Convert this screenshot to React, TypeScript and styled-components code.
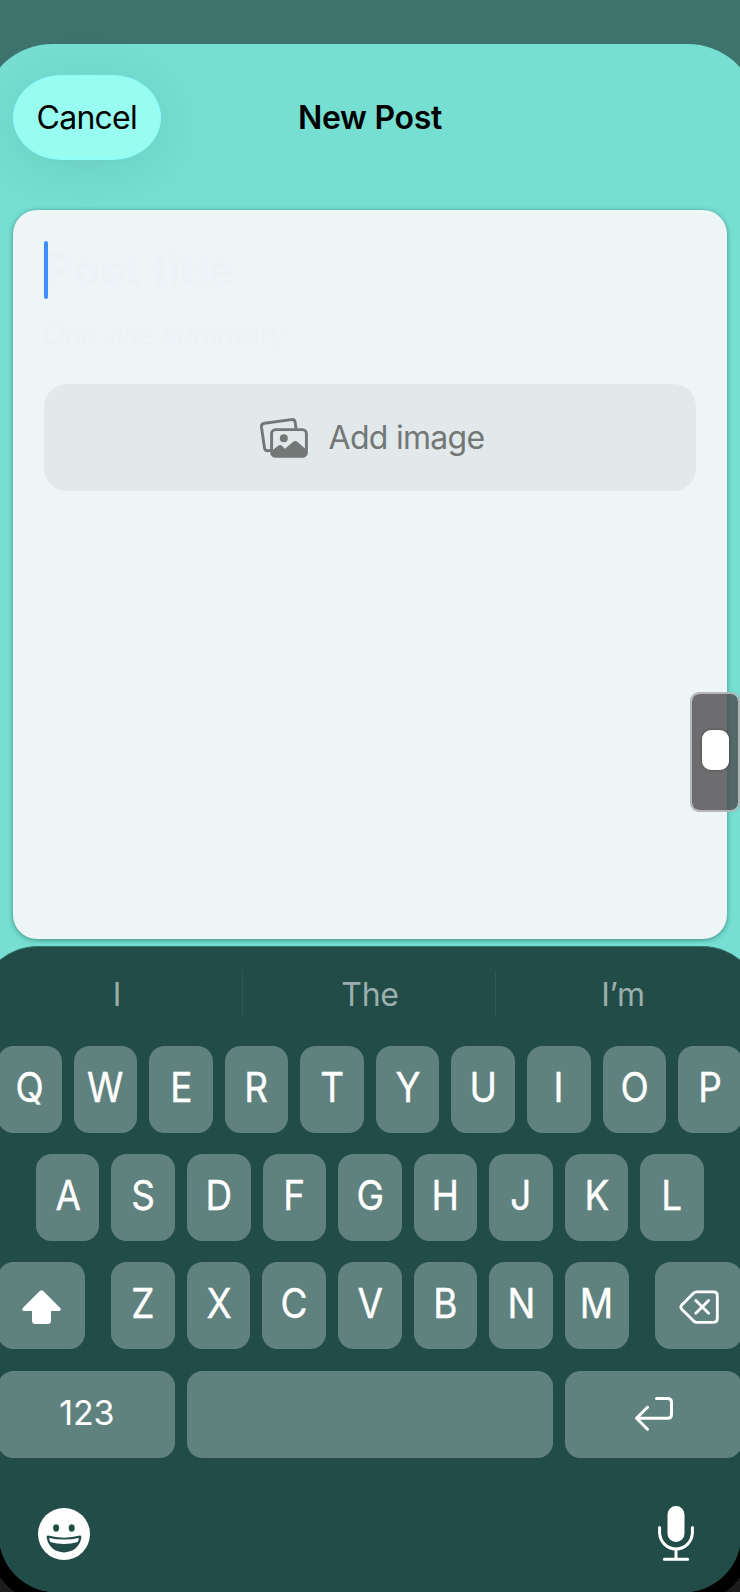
import React from "react";
import styled, { createGlobalStyle } from "styled-components";

const GlobalStyle = createGlobalStyle`
  *, *::before, *::after { box-sizing: border-box; }
  html, body { margin: 0; padding: 0; background: #1c1c1c; }
  body { width: 740px; height: 1592px; overflow: hidden; font-family: Inter, "Liberation Sans", sans-serif; }
  button { font: inherit; border: 0; padding: 0; margin: 0; background: none; }
`;

const Page = styled.div`
  width: 740px;
  height: 1592px;
  overflow: hidden;
  background: #1c1c1c;
`;

const Bezel = styled.div`
  width: 768px;
  height: 1606px;
  margin: 0 -14px;
  padding: 0 13px 14px;
  background: #000;
  border-radius: 0 0 71px 71px;
`;

const Screen = styled.main`
  height: 1592px;
  padding-top: 44px;
  overflow: hidden;
  background: linear-gradient(#3e736d 50%, #224c47 50%);
  border-radius: 0 0 57px 57px;
`;

const Sheet = styled.section`
  height: 1548px;
  margin: 0 -12px;
  padding: 0 13px;
  display: flex;
  flex-direction: column;
  background: linear-gradient(#76dfd2 1000px, #224c47 1000px);
  border-radius: 66px 66px 0 0 / 58px 58px 0 0;
`;

const NavBar = styled.header`
  height: 166px;
  flex: none;
  padding: 30.5px 12.5px 0;
  display: grid;
  grid-template-columns: 148.5px 1fr 148.5px;
  align-items: start;
`;

const CancelButton = styled.button`
  height: 85px;
  border-radius: 48px / 42.5px;
  border: 1px solid #8dfdfb;
  background: #98fcf1;
  box-shadow: 0 8px 52px rgba(0, 50, 40, 0.1);
  color: #000;
  font-size: 32px;
  letter-spacing: -0.75px;
  line-height: 84px;
`;

const NavTitle = styled.h1`
  margin: 0;
  text-align: center;
  font-size: 32px;
  font-weight: 600;
  letter-spacing: -0.3px;
  line-height: 86px;
  color: #000;
`;

const Card = styled.article`
  height: 729px;
  flex: none;
  margin: 0 13px;
  padding: 31px 31px 0 30.5px;
  border-radius: 24px;
  background: #edf5f7;
  box-shadow: 0 1px 5px rgba(0, 60, 50, 0.5);
`;

const TitleField = styled.div`
  display: flex;
  align-items: center;
  height: 58px;
  color: #eef2f6;
  font-size: 44px;
  font-weight: 700;
  letter-spacing: 0.2px;
  line-height: 61px;
`;

const Caret = styled.span`
  position: relative;
  z-index: 1;
  width: 4.5px;
  height: 58px;
  margin-right: -3.5px;
  border-radius: 2px;
  background: #4090fc;
`;

const SummaryField = styled.div`
  height: 85px;
  padding-top: 18px;
  color: #eef2f6;
  font-size: 28px;
  font-style: italic;
  font-weight: 400;
  letter-spacing: -0.2px;
  line-height: 36px;
`;

const AddImageButton = styled.button`
  width: 100%;
  height: 107px;
  display: flex;
  align-items: center;
  justify-content: center;
  gap: 20.5px;
  padding: 0 0 0 5px;
  border-radius: 23px;
  background: #e1e9ea;
  color: #737776;
  font-size: 32px;
  letter-spacing: -0.7px;
`;

const Keyboard = styled.section`
  flex: 1;
  margin: 7px -18px 0;
  padding: 0 16.5px;
  display: flex;
  flex-direction: column;
  background: #224c47;
  border-top: 1px solid #357069;
  border-radius: 56px 56px 0 0 / 51px 51px 0 0;
`;

const Suggestions = styled.div`
  height: 99px;
  flex: none;
  padding: 24px 0 29px;
  display: grid;
  grid-template-columns: repeat(3, 253px);
  justify-content: center;
`;

const Suggestion = styled.button`
  position: relative;
  color: #9bb0ae;
  font-size: 32px;
  line-height: 47px;
  letter-spacing: -0.2px;
  & + &::before {
    content: "";
    position: absolute;
    left: -2px;
    top: 0;
    width: 1.5px;
    height: 46px;
    background: #2f5752;
  }
`;

const KeyRows = styled.div`
  display: grid;
  gap: 21.2px;
  margin-left: -0.25px;
`;

const KeyRow = styled.div<{ $inset?: number }>`
  height: 87px;
  display: flex;
  gap: 12px;
  padding: 0 ${(p) => p.$inset ?? 0}px;
`;

const Key = styled.button<{ $width?: number; $after?: number; $before?: number }>`
  flex: ${(p) => (p.$width ? "none" : "1 1 0")};
  width: ${(p) => (p.$width ? `${p.$width}px` : "auto")};
  height: 87px;
  min-width: 0;
  margin-right: ${(p) => p.$after ?? 0}px;
  margin-left: ${(p) => p.$before ?? 0}px;
  display: flex;
  align-items: center;
  justify-content: center;
  border-radius: 15.5px;
  background: #60827f;
  color: #fff;
`;

const Letter = styled.span`
  font-size: 41px;
  font-weight: 400;
  -webkit-text-stroke: 0.4px #fff;
  line-height: 50px;
  padding-bottom: 5px;
  transform: scaleX(0.9);
`;

const Digits = styled.span`
  font-size: 34px;
  line-height: 40px;
  padding-bottom: 2px;
  letter-spacing: -0.2px;
`;

const BottomBar = styled.footer`
  display: flex;
  justify-content: space-between;
  align-items: center;
  height: 56px;
  margin-top: 48.3px;
  padding: 0 47.5px 0 39.5px;
`;

const SideHandle = styled.div`
  position: absolute;
  left: 690px;
  top: 692px;
  width: 50px;
  height: 120px;
  display: flex;
  align-items: center;
  justify-content: center;
  padding: 0 0 4px 0;
  border: 2px solid rgba(178, 180, 181, 0.96);
  border-radius: 9px;
  background: rgba(76, 74, 76, 0.8);
  background-clip: padding-box;
`;

const Knob = styled.div`
  width: 27px;
  height: 40px;
  border-radius: 9px;
  background: #fff;
  box-shadow: 0 0 3px rgba(0, 0, 0, 0.4);
`;

const PhotosIcon = () => (
  <svg width="48" height="40" viewBox="0 0 48 40" fill="none" stroke="currentColor" strokeWidth="2.9">
    <path d="M36 10.5 35.2 4.4Q34.7 1.2 31.5 1.6L4.5 5.3Q1.1 5.8 1.5 9.2L4.5 30Q5 33 8 32.8L10.8 32.4" />
    <rect x="11.6" y="11.6" width="34.8" height="26.8" rx="4" />
    <circle cx="23.8" cy="20.3" r="4" fill="currentColor" stroke="none" />
    <path d="M12 32.5 18.2 27.7Q20 26.3 21.8 27.7L25 30.8 33.2 23.8Q35.3 22.2 37.4 23.8L46.4 31.8V35Q46.4 38.4 43 38.4H15Q12 38.4 12 35Z" fill="currentColor" stroke="none" />
  </svg>
);

const ShiftIcon = () => (
  <svg width="39" height="34" viewBox="0 0 39 34">
    <path d="M18 .8Q19.5-.5 21 .8L38.2 18Q40 21 36.5 21H29V30.5Q29 34 25.5 34H13.5Q10 34 10 30.5V21H2.5Q-1 21 .8 18Z" fill="#fff" />
  </svg>
);

const DeleteIcon = () => (
  <svg width="40" height="34" viewBox="-.5 -.5 40 34" fill="none" stroke="#fff" strokeWidth="2.8" strokeLinecap="round" strokeLinejoin="round">
    <path d="M17 1.3H34Q37.8 1.3 37.8 5V28Q37.8 31.8 34 31.8H17Q15.5 31.8 14.2 30.6L2 18.4Q.6 16.6 2 14.8L14.2 2.5Q15.5 1.3 17 1.3Z" />
    <path d="M16.3 10 29.1 22.8M29.1 10 16.3 22.8" />
  </svg>
);

const IconOffset = styled.span<{ $left?: number; $top?: number }>`
  display: flex;
  padding: ${(p) => p.$top ?? 0}px 0 0 ${(p) => p.$left ?? 0}px;
`;

const ReturnIcon = () => (
  <svg width="38" height="34" viewBox="0 0 38 34" fill="none" stroke="#fff" strokeWidth="3" strokeLinecap="round" strokeLinejoin="round">
    <path d="M21.5 1.5H32.5Q36.5 1.5 36.5 5.5V17.3Q36.5 21.3 32.5 21.3H1.6M12.5 10.3 1.5 21.3 12.5 32.3" />
  </svg>
);

const EmojiIcon = () => (
  <svg width="52" height="52" viewBox="0 0 52 52">
    <circle cx="26" cy="26" r="26" fill="#fff" />
    <ellipse cx="18.1" cy="20" rx="3" ry="3.7" fill="#224c47" />
    <ellipse cx="33.7" cy="20" rx="3" ry="3.7" fill="#224c47" />
    <path d="M10 27.6Q26 31.8 42 27.6 43.6 27.5 43.4 29.3C42 39 34.5 44.4 26 44.4S10 39 8.6 29.3Q8.4 27.5 10 27.6Z" fill="#224c47" />
    <path d="M11 30Q26 33.2 41 30L39.8 34Q26 37.8 12.2 34Z" fill="#fff" />
  </svg>
);

const MicIcon = () => (
  <svg width="36" height="55" viewBox="0 0 36 55" fill="none" stroke="#fff" strokeWidth="3" strokeLinecap="round">
    <rect x="9.5" y="0" width="17" height="36" rx="8.5" fill="#fff" stroke="none" />
    <path d="M1.6 21.5V26.5A16.4 16.4 0 0 0 34.4 26.5V21.5M18 43.2V53M6.3 53.2H29.7" />
  </svg>
);

const letterKeys = (letters: string) =>
  letters.split("").map((letter) => (
    <Key key={letter}>
      <Letter>{letter}</Letter>
    </Key>
  ));

export default function App() {
  return (
    <Page>
      <GlobalStyle />
      <Bezel>
        <Screen>
          <Sheet>
            <NavBar>
              <CancelButton>Cancel</CancelButton>
              <NavTitle>New Post</NavTitle>
            </NavBar>
            <Card>
              <TitleField>
                <Caret />
                Post title
              </TitleField>
              <SummaryField>One-line summary</SummaryField>
              <AddImageButton>
                <PhotosIcon />
                Add image
              </AddImageButton>
            </Card>
            <Keyboard>
              <Suggestions>
                <Suggestion>I</Suggestion>
                <Suggestion>The</Suggestion>
                <Suggestion>I’m</Suggestion>
              </Suggestions>
              <KeyRows>
                <KeyRow>{letterKeys("QWERTYUIOP")}</KeyRow>
                <KeyRow $inset={37.7}>{letterKeys("ASDFGHJKL")}</KeyRow>
                <KeyRow>
                  <Key $width={86.5} $after={14.2}>
                    <IconOffset $top={2}>
                      <ShiftIcon />
                    </IconOffset>
                  </Key>
                  {letterKeys("ZXCVBNM")}
                  <Key $width={86.5} $before={14.2}>
                    <IconOffset $left={1.5} $top={2.5}>
                      <DeleteIcon />
                    </IconOffset>
                  </Key>
                </KeyRow>
                <KeyRow>
                  <Key $width={177}>
                    <Digits>123</Digits>
                  </Key>
                  <Key aria-label="space" />
                  <Key $width={177}>
                    <IconOffset $left={1}>
                      <ReturnIcon />
                    </IconOffset>
                  </Key>
                </KeyRow>
              </KeyRows>
              <BottomBar>
                <EmojiIcon />
                <MicIcon />
              </BottomBar>
            </Keyboard>
          </Sheet>
        </Screen>
      </Bezel>
      <SideHandle>
        <Knob />
      </SideHandle>
    </Page>
  );
}
